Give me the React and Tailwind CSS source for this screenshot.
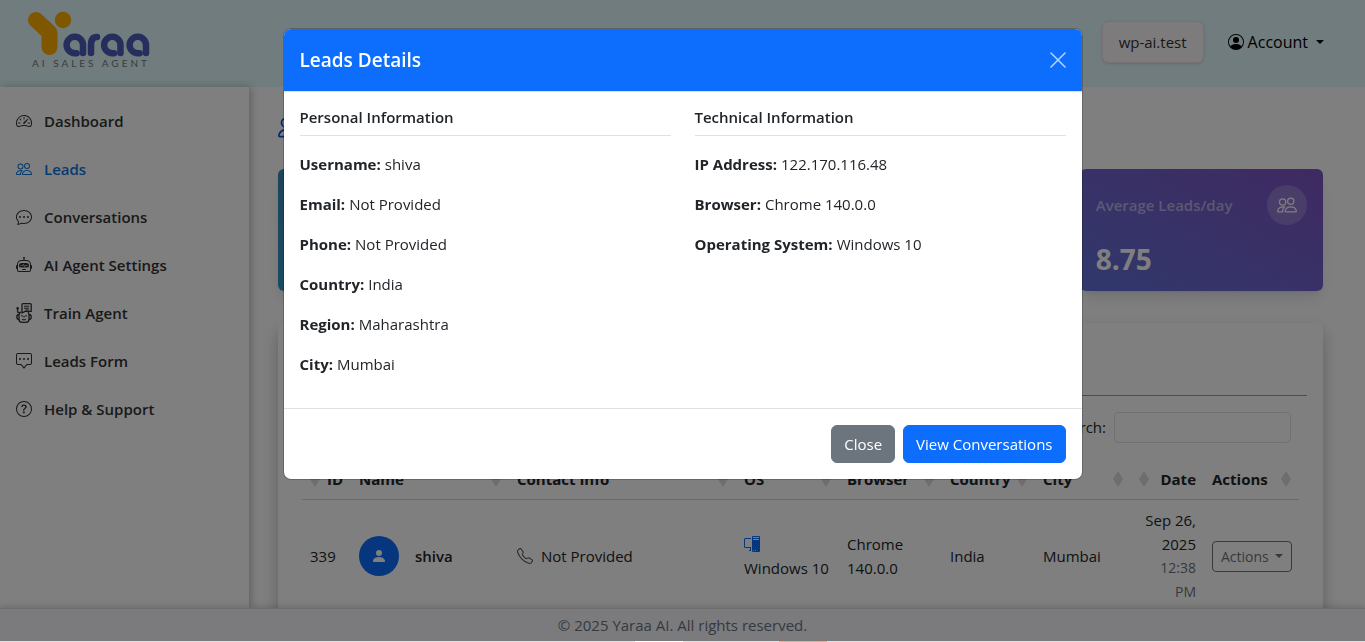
import {
  BsChatDots,
  BsChatSquareDots,
  BsPcDisplay,
  BsPeople,
  BsPersonCircle,
  BsPersonFill,
  BsQuestionCircle,
  BsRobot,
  BsSpeedometer2,
  BsTelephone,
} from 'react-icons/bs';

const personal = [
  ['Username', 'shiva'],
  ['Email', 'Not Provided'],
  ['Phone', 'Not Provided'],
  ['Country', 'India'],
  ['Region', 'Maharashtra'],
  ['City', 'Mumbai'],
];

const technical = [
  ['IP Address', '122.170.116.48'],
  ['Browser', 'Chrome 140.0.0'],
  ['Operating System', 'Windows 10'],
];

const columns = [
  { label: 'ID', width: 'w-[49px]', end: true },
  { label: 'Name', width: 'w-[158px]' },
  { label: 'Contact Info', width: 'w-[227px]' },
  { label: 'OS', width: 'w-[103px]' },
  { label: 'Browser', width: 'w-[103px]' },
  { label: 'Country', width: 'w-[93px]' },
  { label: 'City', width: 'w-[96px]' },
  { label: 'Date', width: 'w-[73px]', end: true },
  { label: 'Actions', width: 'w-[95px]' },
];

// Robot holding a document
function TrainIcon() {
  return (
    <svg viewBox="0 0 16 20" width="16" height="20" fill="none" stroke="currentColor" strokeWidth="1.3">
      <path d="M6 10V1.600Q6 .7 7 .7h7.300q.9 0 .9.9v6.800H9z" />
      <path d="M8 3.200h5.200M8 5.200h5.200M9 7h4" strokeWidth="1" />
      <circle cx="1.600" cy="5.200" r="1.200" fill="currentColor" stroke="none" />
      <path d="M1.600 5.500v3.500l2.400 1" />
      <path d="M5 9Q3 9.500 3 12v4.200q0 3.100 3 3.100h4q3 0 3-3.100V12q0-2-1-3M3 11.500Q.8 11.500.8 14t2.200 2.500M13 11.500q2.200 0 2.200 2.500T13 16.500" />
      <path d="M6 12v1.500M10 12v1.500M8 13v1.500M6.200 16.200q1.800 1.300 3.600 0" />
    </svg>
  );
}

const menu = [
  { label: 'Dashboard', Icon: BsSpeedometer2 },
  { label: 'Leads', Icon: BsPeople, active: true },
  { label: 'Conversations', Icon: BsChatDots },
  { label: 'AI Agent Settings', Icon: BsRobot },
  { label: 'Train Agent', Icon: TrainIcon },
  { label: 'Leads Form', Icon: BsChatSquareDots },
  { label: 'Help & Support', Icon: BsQuestionCircle },
];

function Logo() {
  return (
    <svg viewBox="0 0 122 58" width="122" height="58" fill="none" strokeLinecap="round" aria-label="Yaraa AI Sales Agent">
      <path d="M8 9L21.500 21.500v14.500" stroke="#ffae00" strokeWidth="16" strokeLinejoin="round" />
      <circle cx="35" cy="9" r="8.200" fill="#ffae00" />
      <g stroke="#4a5cb8" strokeWidth="6.500">
        <path d="M55 42V34A8.200 8.200 0 1 0 46.800 42.200H48.500" />
        <path d="M63 42V34Q63 26 69 26" />
        <path d="M92.500 42V34A8.200 8.200 0 1 0 84.300 42.200H86" />
        <path d="M118 42V34A8.200 8.200 0 1 0 109.800 42.200H111.500" />
      </g>
      <text x="4" y="56" fontSize="10" letterSpacing="3" fill="#777" fontFamily="Lato, sans-serif">AI SALES AGENT</text>
    </svg>
  );
}

function Caret() {
  return <span className="border-x-4 border-t-4 border-x-transparent border-t-current" />;
}

function SortIcon() {
  return (
    <svg viewBox="0 0 10 16" width="10" height="16" fill="#dcdcdc" className="shrink-0">
      <path d="M5 0l5 8H0zM5 16l5-8H0z" />
    </svg>
  );
}

function InfoColumn({ title, rows }) {
  return (
    <section className="flex-1">
      <h6 className="border-b border-[#dee2e6] pb-2 leading-[19px] font-semibold">{title}</h6>
      <dl className="mt-4 flex flex-col gap-4">
        {rows.map(([name, value]) => (
          <div key={name} className="flex gap-1 leading-6">
            <dt className="font-bold">{name}:</dt>
            <dd>{value}</dd>
          </div>
        ))}
      </dl>
    </section>
  );
}

function LeadsModal() {
  return (
    <div className="fixed inset-0 z-20 flex items-start justify-center bg-black/50 pt-7">
      <div
        role="dialog"
        aria-label="Leads Details"
        className="w-full max-w-[800px] overflow-hidden rounded-lg border border-black/20 bg-white bg-clip-padding"
      >
        <header className="flex items-center justify-between border-b border-[#dee2e6] bg-[#0d6efd] p-4 text-white">
          <h5 className="text-[19px] leading-[30px] font-semibold">Leads Details</h5>
          <button aria-label="Close dialog" className="opacity-70">
            <svg viewBox="0 0 16 16" width="16" height="16" stroke="currentColor" strokeWidth="1.500" strokeLinecap="round">
              <path d="M1 1l14 14M15 1L1 15" />
            </svg>
          </button>
        </header>
        <div className="flex gap-6 px-4 pt-4 pb-8">
          <InfoColumn title="Personal Information" rows={personal} />
          <InfoColumn title="Technical Information" rows={technical} />
        </div>
        <footer className="flex justify-end gap-2 border-t border-[#dee2e6] p-4 text-white">
          <button className="rounded-md border border-[#6c757d] bg-[#6c757d] px-3 py-1.5 leading-6">Close</button>
          <button className="rounded-md border border-[#0d6efd] bg-[#0d6efd] px-3 py-1.5 leading-6">
            View Conversations
          </button>
        </footer>
      </div>
    </div>
  );
}

function LeadsTable() {
  return (
    <table className="w-full table-fixed border-collapse">
      <thead>
        <tr className="border-b border-[#d4d4d4]">
          {columns.map(({ label, width, end }) => (
            <th key={label} className={`${width} p-2 text-left leading-6 font-bold`}>
              <span className={`flex items-center justify-between ${end ? 'flex-row-reverse' : ''}`}>
                {label}
                <SortIcon />
              </span>
            </th>
          ))}
        </tr>
      </thead>
      <tbody>
        <tr className="leading-6">
          <td className="p-2">339</td>
          <td className="p-2">
            <div className="flex items-center gap-4">
              <span className="flex size-10 items-center justify-center rounded-full bg-[#0d6efd] text-white">
                <BsPersonFill size={16} />
              </span>
              <span className="font-semibold">shiva</span>
            </div>
          </td>
          <td className="p-2">
            <div className="flex items-center gap-2">
              <BsTelephone size={16} className="text-[#555]" />
              Not Provided
            </div>
          </td>
          <td className="p-2 whitespace-nowrap">
            <BsPcDisplay size={16} className="my-1 text-[#0d6efd]" />
            Windows 10
          </td>
          <td className="p-2">Chrome 140.0.0</td>
          <td className="p-2">India</td>
          <td className="p-2">Mumbai</td>
          <td className="p-2 text-right">
            Sep 26, 2025 <small className="block text-sm leading-6 text-[#6c757d]">12:38 PM</small>
          </td>
          <td className="p-2">
            <button className="flex items-center gap-1.5 rounded border border-[#6c757d] px-2 py-1 text-sm leading-[21px] text-[#6c757d]">
              Actions
              <Caret />
            </button>
          </td>
        </tr>
      </tbody>
    </table>
  );
}

export default function App() {
  return (
    <div className="flex h-screen flex-col overflow-hidden bg-white font-['Open_Sans','Noto_Sans',sans-serif] text-[15px] text-[#212529]">
      <nav className="flex h-[87px] shrink-0 items-center justify-between bg-[#e0f9fc] pr-[41px] pl-7 text-black">
        <a href="#home" className="-mt-2">
          <Logo />
        </a>
        <div className="flex items-center gap-6 pb-1">
          <a href="#site" className="rounded-md border border-[#f0e0e8] bg-[#fcf7fa] px-4 py-2 leading-6 text-[#333] shadow">
            wp-ai.test
          </a>
          <button className="flex items-center gap-1 text-base leading-6">
            <BsPersonCircle size={16} />
            Account
            <span className="ml-1 flex">
              <Caret />
            </span>
          </button>
        </div>
      </nav>

      <div className="flex min-h-0 flex-1">
        <aside className="w-[249px] shrink-0 shadow-[2px_0_8px_rgba(0,0,0,0.25)]">
          <ul className="flex flex-col gap-6 px-4 pt-[22px]">
            {menu.map(({ label, Icon, active }) => (
              <li key={label}>
                <a
                  href="#menu"
                  className={`flex items-center gap-3 leading-6 font-semibold ${active ? 'text-[#0d76e0]' : 'text-[#333]'}`}
                >
                  <Icon size={16} />
                  {label}
                </a>
              </li>
            ))}
          </ul>
        </aside>

        <main className="min-w-0 flex-1 overflow-hidden pt-6 pr-[42px] pl-[29px]">
          <div className="flex h-8 items-center text-[#0d4fd6]">
            <BsPeople size={28} />
          </div>
          <div className="mt-[26px] grid grid-cols-4 gap-6">
            <div className="h-[122px] rounded-md bg-linear-to-b from-[#3c86ba] to-[#2f98c4] shadow-lg" />
            <div className="h-[122px] rounded-md bg-[#2f8fc4] shadow-lg" />
            <div className="h-[122px] rounded-md bg-[#2f8fc4] shadow-lg" />
            <div className="h-[122px] rounded-md bg-linear-to-tr from-[#5f70d8] to-[#7e54c4] p-4 text-white shadow-lg">
              <div className="flex items-center justify-between">
                <h2 className="font-semibold text-white/50">Average Leads/day</h2>
                <span className="flex size-10 items-center justify-center rounded-full bg-white/20">
                  <BsPeople size={20} />
                </span>
              </div>
              <p className="mt-4 text-[28px] leading-9 font-bold">8.75</p>
            </div>
          </div>

          <section className="mt-8 rounded-md bg-white px-4 pt-4 pb-10 shadow-[0_8px_16px_rgba(0,0,0,0.25)]">
            <div className="h-[57px] border-b border-[#999]" />
            <div className="flex items-center justify-end gap-2 py-4 pr-4">
              <label htmlFor="search">Search:</label>
              <input id="search" className="h-[31px] w-[177px] rounded border border-[#dee2e6] px-2" />
            </div>
            <div className="px-2">
              <LeadsTable />
            </div>
          </section>
        </main>
      </div>

      <footer className="z-10 h-[33px] shrink-0 border-t border-[#ddd] bg-[#f6f6fa] text-center leading-8 text-[#6c757d] shadow-[0_-2px_6px_rgba(0,0,0,0.15)]">
        © 2025 Yaraa AI. All rights reserved.
      </footer>
      <LeadsModal />
      <div className="z-30 flex h-px shrink-0 justify-center bg-[#dfe0e2] pl-24">
        <span className="w-12 bg-white" />
        <span className="ml-24 w-12 bg-[#e3ae88]" />
      </div>
    </div>
  );
}
